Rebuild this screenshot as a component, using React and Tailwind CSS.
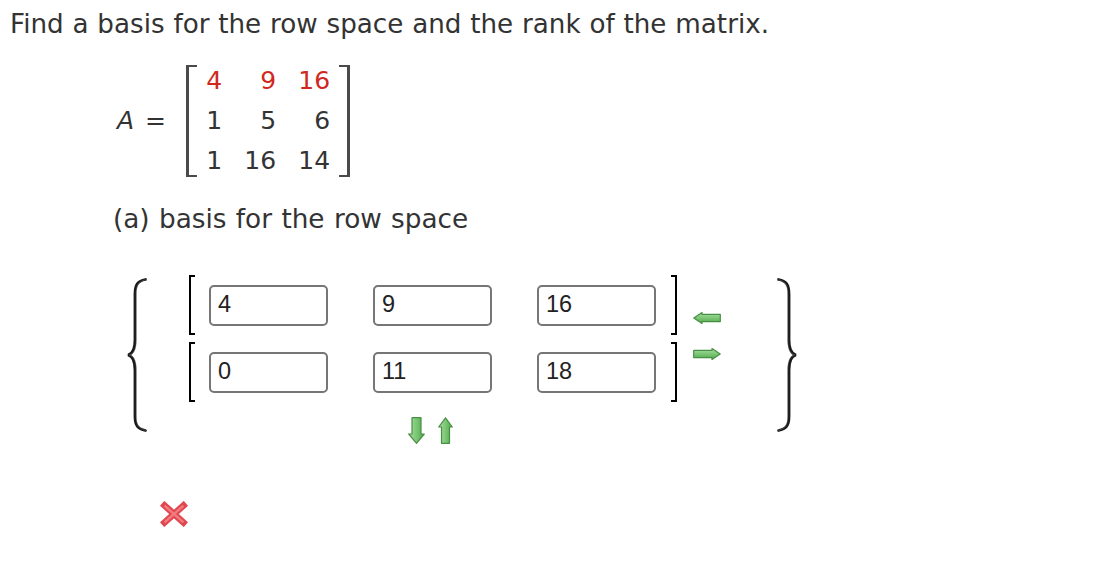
import React from "react";

const sans = { fontFamily: '"DejaVu Sans", Verdana, sans-serif' };
const arial = { fontFamily: '"Liberation Sans", Arial, sans-serif' };

function Grad({ id, vertical }) {
  return (
    <defs>
      <linearGradient id={id} x1="0" y1="0" x2={vertical ? "1" : "0"} y2={vertical ? "0" : "1"}>
        <stop offset="0" stopColor="#a9dea3" />
        <stop offset="0.5" stopColor="#7cc676" />
        <stop offset="1" stopColor="#52a84d" />
      </linearGradient>
    </defs>
  );
}

function LeftArrow() {
  return (
    <svg width="28" height="12" viewBox="0 0 28 12">
      <Grad id="gl" />
      <path d="M0.8 6 L9 0.6 L9 2.4 L27.3 2.4 L27.3 9.6 L9 9.6 L9 11.4 Z" fill="url(#gl)" stroke="#478f43" strokeWidth="1.2" strokeLinejoin="round" />
    </svg>
  );
}
function RightArrow() {
  return (
    <svg width="28" height="12" viewBox="0 0 28 12">
      <Grad id="gr" />
      <path d="M27.2 6 L19 0.6 L19 2.4 L0.7 2.4 L0.7 9.6 L19 9.6 L19 11.4 Z" fill="url(#gr)" stroke="#478f43" strokeWidth="1.2" strokeLinejoin="round" />
    </svg>
  );
}
function DownArrow() {
  return (
    <svg width="17" height="27" viewBox="0 0 17 27">
      <Grad id="gd" vertical />
      <path d="M4 0.7 L13 0.7 L13 17 L16.3 17 L8.5 26.3 L0.7 17 L4 17 Z" fill="url(#gd)" stroke="#478f43" strokeWidth="1.2" strokeLinejoin="round" />
    </svg>
  );
}
function UpArrow() {
  return (
    <svg width="15" height="27" viewBox="0 0 15 27">
      <Grad id="gu" vertical />
      <path d="M3.5 26.3 L11.5 26.3 L11.5 10 L14.3 10 L7.5 0.8 L0.7 10 L3.5 10 Z" fill="url(#gu)" stroke="#478f43" strokeWidth="1.2" strokeLinejoin="round" />
    </svg>
  );
}

function Brace({ right }) {
  const d = "M18.5 1.5 C11 3 8 6 8 16 L8 62 C8 72 5 76 1 77 C5 78 8 82 8 92 L8 138 C8 148 11 151 18.5 152.5";
  return (
    <svg width="20" height="154" viewBox="0 0 20 154" style={right ? { transform: "scaleX(-1)" } : undefined}>
      <path d={d} fill="none" stroke="#1a1a1a" strokeWidth="2.8" strokeLinecap="round" />
      <path d={d} fill="none" stroke="#888" strokeWidth="0.8" transform="translate(1.3 0)" opacity="0.5" />
    </svg>
  );
}

function RedX() {
  return (
    <svg width="28" height="26" viewBox="0 0 28 26">
      <g strokeLinecap="square">
        <line x1="4.5" y1="4.5" x2="23.5" y2="21.5" stroke="#e0474e" strokeWidth="6.5" />
        <line x1="23.5" y1="4.5" x2="4.5" y2="21.5" stroke="#e0474e" strokeWidth="6.5" />
        <line x1="5.5" y1="5.5" x2="22.5" y2="20.5" stroke="#f07a7e" strokeWidth="2.5" />
        <line x1="22.5" y1="5.5" x2="5.5" y2="20.5" stroke="#f07a7e" strokeWidth="2.5" />
      </g>
    </svg>
  );
}

function Box({ value, first }) {
  return (
    <div
      className={`${first ? "ml-[14px]" : "ml-[45px]"} flex h-[41px] w-[119px] items-center rounded-[5px] border-2 border-[#767676] pl-[7px] text-[23.5px] text-[#222]`}
      style={arial}
    >
      {value}
    </div>
  );
}

function VecRow({ values }) {
  return (
    <div className="flex h-[60px] items-center">
      <div className="h-full w-[6px] border-y-2 border-l-2 border-black" />
      <Box value={values[0]} first />
      <Box value={values[1]} />
      <Box value={values[2]} />
      <div className="ml-[15px] h-full w-[6px] border-y-2 border-r-2 border-black" />
    </div>
  );
}

export default function App() {
  const rows = [
    ["4", "9", "16"],
    ["1", "5", "6"],
    ["1", "16", "14"],
  ];
  return (
    <div className="min-h-[564px] w-[1118px] bg-white text-[#333]" style={sans}>
      <div className="pl-[10px] pt-[8px] text-[26.2px] leading-[32px] [word-spacing:0.5px]">
        Find a basis for the row space and the rank of the matrix.
      </div>

      <div className="mt-[21px] flex items-center pl-[117px] text-[25px]">
        <span className="italic">A</span>
        <span className="ml-[11px]">=</span>
        <div className="ml-[20px] flex h-[120px]">
          <div className="my-[4px] w-[11px] border-y-2 border-l-[3px] border-[#4a4a4a]" />
          <div className="grid grid-cols-[25px_54px_54px] text-right leading-[40px]">
            {rows.map((r, i) =>
              r.map((v, j) => (
                <div key={`${i}-${j}`} className={i === 0 ? "text-[#d0281e]" : "text-[#333]"}>
                  {v}
                </div>
              ))
            )}
          </div>
          <div className="my-[4px] ml-[9px] w-[11px] border-y-2 border-r-[3px] border-[#4a4a4a]" />
        </div>
      </div>

      <div className="mt-[22px] pl-[113px] text-[26.3px] leading-[32px] [word-spacing:1px]">(a) basis for the row space</div>

      <div className="mt-[40px] flex items-start pl-[127px]">
        <div className="mt-[3px]">
          <Brace />
        </div>
        <div className="ml-[42px] flex flex-col">
          <div className="flex flex-col gap-[7px]">
            <VecRow values={["4", "9", "16"]} />
            <VecRow values={["0", "11", "18"]} />
          </div>
          <div className="mt-[15px] flex gap-[13px] pl-[219px]">
            <DownArrow />
            <UpArrow />
          </div>
        </div>
        <div className="ml-[16px] mt-[37px] flex flex-col gap-[24px]">
          <LeftArrow />
          <RightArrow />
        </div>
        <div className="ml-[56px] mt-[3px]">
          <Brace right />
        </div>
      </div>

      <div className="mt-[57px] pl-[160px]">
        <RedX />
      </div>
    </div>
  );
}
